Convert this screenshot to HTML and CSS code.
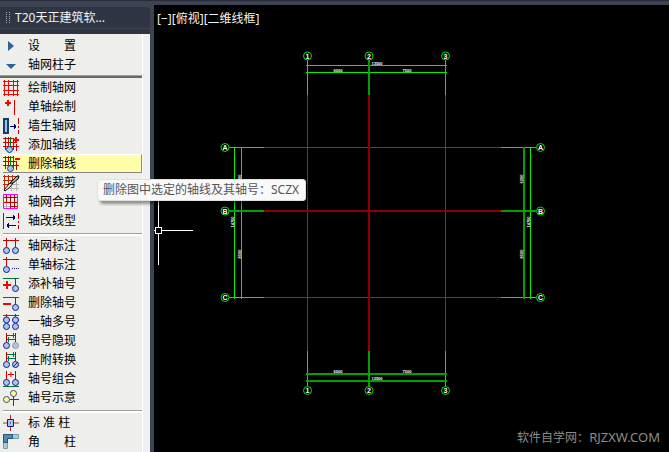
FILE: index.html
```html
<!DOCTYPE html>
<html lang="zh-CN">
<head>
  <meta charset="UTF-8" />
  <meta name="viewport" content="width=device-width, initial-scale=1.0"/>
  <title>T20天正建筑软件</title>
  <link rel="stylesheet" href="styles.css">
</head>
<body>
  <div class="app">

    <aside class="sidebar">
      <header class="panel-title">
        <svg class="grip" width="4" height="12" viewBox="0 0 4 12" aria-hidden="true">
          <path d="M.5 0v12M3.5 0v12" stroke="#aab0ba" stroke-dasharray="1 1"/>
        </svg>
        <span>T20天正建筑软...</span>
      </header>
      <div class="panel-edge"></div>

      <nav class="menu">
        <div class="group group-top">
          <button class="item"><svg class="icon" viewBox="0 0 16 16"><path d="M5 3l6 5-6 5z" fill="#2a629a"/></svg>设　　置</button>
          <button class="item"><svg class="icon" viewBox="0 0 16 16"><path d="M3 7h10l-5 5z" fill="#2a629a"/></svg>轴网柱子</button>
        </div>

        <div class="group">
          <button class="item"><svg class="icon" viewBox="0 0 16 16"><path d="M1.500 0v16M5.500 0v16M10.500 0v16M14.500 0v16M0 1.500h16M0 5.500h16M0 10.500h16M0 14.500h16" stroke="#f00"/></svg>绘制轴网</button>
          <button class="item"><svg class="icon" viewBox="0 0 16 16"><path d="M2 4h6M5 1v6" stroke="#f00" stroke-width="2"/><path d="M11.500 1v15" stroke="#e00000"/></svg>单轴绘制</button>
          <button class="item"><svg class="icon" viewBox="0 0 16 16"><path d="M1 1h4v14H1z" fill="#9cc4dc" stroke="#123f68" stroke-width="2"/><path d="M7 8.500h6M11.500 6v5M12.500 7v3" stroke="#000080"/><path d="M15.500 0v16" stroke="#c00000" stroke-dasharray="6 2 2 2"/></svg>墙生轴网</button>
          <button class="item"><svg class="icon" viewBox="0 0 16 16"><path d="M2.500 0v13M5.500 0v9M10.500 1v12M13.500 7v7M0 1.500h10M0 5.500h14M0 9.500h16" stroke="#c80000"/><path d="M7.500 0v9" stroke="#008000"/><path d="M10 3h6M13 0v6" stroke="#f00" stroke-width="2"/><circle cx="6.500" cy="12.500" r="3" fill="#a5c8f2" stroke="#18389c"/></svg>添加轴线</button>
          <button class="item active" aria-describedby="tip"><svg class="icon" viewBox="0 0 16 16"><path d="M2.500 0v13M5.500 0v9M10.500 0v13M13.500 6v8M0 1.500h11M0 5.500h14M0 9.500h16" stroke="#c80000"/><path d="M7.500 0v9" stroke="#008000"/><path d="M12 3h5" stroke="#f00" stroke-width="2"/><circle cx="7.500" cy="12.500" r="3" fill="#a5c8f2" stroke="#18389c"/></svg>删除轴线</button>
          <button class="item"><svg class="icon" viewBox="0 0 16 16"><path d="M8.500 8v8M13.500 3v13M7 9.500h9M5 13.500h11" stroke="#b5b5ad"/><path d="M1.500 0v14M5.500 0v11M9.500 0v8M0 1.500h13M0 5.500h11M0 9.500h7" stroke="#c82800"/><path d="M1 15l6-7 3 0-3 4-5 4z" fill="#fff" stroke="#000"/><path d="M7 8l7-7 2 0-1 3-5 4z" fill="#aaa" stroke="#000"/></svg>轴线裁剪</button>
          <button class="item"><svg class="icon" viewBox="0 0 16 16"><path d="M3.500 8v6M1 12.500h6" stroke="#b5b5ad"/><path d="M3.500 1v8M7.500 1v13M11.500 1v13M1 3.500h13M1 8.500h13M8 12.500h6" stroke="#b00000"/><path d="M.500 .500h14v14H.500z" fill="none" stroke="#f0f"/></svg>轴网合并</button>
          <button class="item"><svg class="icon" viewBox="0 0 16 16"><path d="M.500 0v16" stroke="#c00000"/><path d="M15.500 0v16" stroke="#c00000" stroke-dasharray="6 2 2 2"/><path d="M3 4.500h9M10.500 2v5M11.500 3v3M4 12.500h9M5.500 10v5M4.500 11v3" stroke="#000080"/></svg>轴改线型</button>
        </div>

        <div class="group">
          <button class="item"><svg class="icon" viewBox="0 0 16 16"><path d="M0 2.500h16M3.500 0v9M12.500 0v9" stroke="#c80000"/><circle cx="3.500" cy="12.500" r="3" fill="#a5c8f2" stroke="#18188c"/><circle cx="12.500" cy="12.500" r="3" fill="#a5c8f2" stroke="#18188c"/></svg>轴网标注</button>
          <button class="item"><svg class="icon" viewBox="0 0 16 16"><path d="M0 2.500h16M3.500 0v9" stroke="#c80000"/><circle cx="3.500" cy="12.500" r="3" fill="#a5c8f2" stroke="#18188c"/><path d="M9 11.500h7" stroke="#18188c" stroke-dasharray="1 1"/></svg>单轴标注</button>
          <button class="item"><svg class="icon" viewBox="0 0 16 16"><path d="M0 2.500h16" stroke="#007040"/><path d="M12.500 3v7" stroke="#c80000"/><path d="M0 9h8M4 5v8" stroke="#f00" stroke-width="2"/><circle cx="12.500" cy="12.500" r="3" fill="#a5c8f2" stroke="#18188c"/></svg>添补轴号</button>
          <button class="item"><svg class="icon" viewBox="0 0 16 16"><path d="M0 2.500h16" stroke="#007040"/><path d="M12.500 3v7" stroke="#c80000"/><path d="M0 9h8" stroke="#f00" stroke-width="2"/><circle cx="12.500" cy="12.500" r="3" fill="#a5c8f2" stroke="#18188c"/></svg>删除轴号</button>
          <button class="item"><svg class="icon" viewBox="0 0 16 16"><path d="M0 1.500h16" stroke="#007040"/><path d="M3.500 0v3M12.500 0v3" stroke="#c80000"/><g fill="#a5c8f2" stroke="#18188c"><circle cx="3.500" cy="6" r="3"/><circle cx="12.500" cy="6" r="3"/><circle cx="3.500" cy="12.500" r="3"/><circle cx="12.500" cy="12.500" r="3"/></g></svg>一轴多号</button>
          <button class="item"><svg class="icon" viewBox="0 0 16 16"><path d="M3.500 0v9M12.500 0v9" stroke="#c80000"/><path d="M4 2.500h8M10.500 0v5M4 6.500h8M5.500 4v5" stroke="#007040"/><circle cx="3.500" cy="12.500" r="3" fill="#a5c8f2" stroke="#18188c"/><circle cx="12.500" cy="12.500" r="3" fill="#a5c8f2" stroke="#999"/></svg>轴号隐现</button>
          <button class="item"><svg class="icon" viewBox="0 0 16 16"><path d="M3.500 0v9M12.500 0v9" stroke="#c80000"/><path d="M4 2.500h8M10.500 0v5M4 6.500h8M5.500 4v5" stroke="#007040"/><circle cx="3.500" cy="12.500" r="3" fill="#a5c8f2" stroke="#18188c"/><circle cx="12.500" cy="12.500" r="3" fill="#a5c8f2" stroke="#18188c"/><path d="M10 15l5-5" stroke="#18188c"/></svg>主附转换</button>
          <button class="item"><svg class="icon" viewBox="0 0 16 16"><path d="M3.500 0v9M12.500 0v9M5 3.500h6M8 1v5" stroke="#c80000"/><path d="M0 15.500h16" stroke="#007040"/><circle cx="3.500" cy="11.500" r="3" fill="#a5c8f2" stroke="#18188c"/><circle cx="12.500" cy="11.500" r="3" fill="#a5c8f2" stroke="#18188c"/></svg>轴号组合</button>
          <button class="item"><svg class="icon" viewBox="0 0 16 16"><path d="M7 9.500h9M10.500 6v10" stroke="#c80000"/><circle cx="3.500" cy="9.500" r="3" fill="#ffff98" stroke="#444470"/><circle cx="10.500" cy="3.500" r="3" fill="#ffff98" stroke="#444470"/></svg>轴号示意</button>
        </div>

        <div class="group">
          <button class="item"><svg class="icon" viewBox="0 0 16 16"><path d="M0 8h16M7.500 0v16" stroke="#b43030"/><path d="M4.500 4.500h6v7h-6z" fill="#a5c8f2" stroke="#18188c"/><path d="M7 8h1" stroke="#18188c"/></svg>标 准 柱</button>
          <button class="item"><svg class="icon" viewBox="0 0 16 16"><path d="M.500 .500h15v4H4.500v10h-4z" fill="#a6cedf" stroke="#7898ac"/><path d="M.500 .500h9v4h-5v4h-4z" fill="#4f8bb5" stroke="#22547c"/></svg>角　　柱</button>
        </div>
      </nav>
    </aside>

    <main class="canvas">
      <h1 class="view-label">[−][俯视][二维线框]</h1>

      <svg class="drawing" viewBox="0 0 515 447" preserveAspectRatio="xMinYMin meet">
        <!-- axis grid -->
        <g class="lines">
          <path d="M153.500 90v256M291.500 90v256M110 142.500h237M110 292.500h237" stroke="#f00000"/>
          <path d="M215 90v256M110 206h237" stroke="#880000" stroke-width="2"/>
        </g>

        <!-- axis ends and dimension lines -->
        <g class="lines" stroke="#00f000">
          <path d="M153.500 55v35M291.500 55v35M153.500 346v35M291.500 346v35"/>
          <path d="M75 142.500h35M75 292.500h35M347 142.500h35M347 292.500h35"/>
          <path d="M152 60.500h141M152 67.500h141M80.500 142v152M87.500 142v152M376.500 142v152"/>
          <path d="M215 55v35M215 346v35M75 206h35M347 206h35M152 369h141M152 376h141M370 142v152" stroke="#00a000" stroke-width="2"/>
        </g>

        <g fill="#000" stroke="#00e000">
          <circle cx="153.500" cy="51" r="4"/>
          <circle cx="215" cy="51" r="4"/>
          <circle cx="291.500" cy="51" r="4"/>
          <circle cx="153.500" cy="385.500" r="4"/>
          <circle cx="215" cy="385.500" r="4"/>
          <circle cx="291.500" cy="385.500" r="4"/>
          <circle cx="71" cy="142.500" r="4"/>
          <circle cx="71" cy="206" r="4"/>
          <circle cx="71" cy="292.500" r="4"/>
          <circle cx="386.500" cy="142.500" r="4"/>
          <circle cx="386.500" cy="206" r="4"/>
          <circle cx="386.500" cy="292.500" r="4"/>
        </g>

        <g class="axis-no">
          <text x="153.500" y="53.500">1</text>
          <text x="215" y="53.500">2</text>
          <text x="291.500" y="53.500">3</text>
          <text x="153.500" y="388">1</text>
          <text x="215" y="388">2</text>
          <text x="291.500" y="388">3</text>
          <text x="71" y="145">A</text>
          <text x="71" y="208.500">B</text>
          <text x="71" y="295">C</text>
          <text x="386.500" y="145">A</text>
          <text x="386.500" y="208.500">B</text>
          <text x="386.500" y="295">C</text>
        </g>

        <g class="dim">
          <text x="223" y="60">13500</text>
          <text x="184" y="67">6000</text>
          <text x="253" y="67">7500</text>
          <text x="184" y="368">6000</text>
          <text x="253" y="368">7500</text>
          <text x="223" y="375">13500</text>
          <text transform="translate(87 174) rotate(-90)">6200</text>
          <text transform="translate(87 249) rotate(-90)">8500</text>
          <text transform="translate(80 217) rotate(-90)">14700</text>
          <text transform="translate(369 174) rotate(-90)">6200</text>
          <text transform="translate(369 249) rotate(-90)">8500</text>
          <text transform="translate(376 217) rotate(-90)">14700</text>
        </g>

        <!-- cursor -->
        <g class="lines" stroke="#fff">
          <path d="M4.500 192v30M4.500 229v31M8 225.500h31M0 225.500h1"/>
          <path d="M1.500 222.500h6v6h-6z" fill="none"/>
        </g>
      </svg>

      <p class="watermark">软件自学网：<span class="domain">RJZXW.COM</span></p>
    </main>

    <div class="tooltip" id="tip" role="tooltip">删除图中选定的轴线及其轴号：SCZX</div>
  </div>
</body>
</html>
```

FILE: styles.css
```css
:root {
  --frame: #3c4454;
  --panel: #eeeeea;
  --row: 19px;
}

* {
  box-sizing: border-box;
}

body {
  margin: 0;
  background-color: var(--frame);
  font-family: "Noto Sans", "Noto Sans CJK SC", sans-serif;
  font-size: 12px;
}

.app {
  position: relative;
  display: flex;
  min-height: 100vh;
  padding-top: 4px;
  border-top: 1px solid #282d39;
}

.sidebar {
  display: flex;
  flex-direction: column;
  flex: none;
  width: 150px;
  padding-top: 2px;
}

.panel-title {
  display: flex;
  align-items: center;
  gap: 5px;
  height: 21px;
  padding-left: 6px;
  border-radius: 0 4px 0 0;
  background-color: #2f3542;
  color: #f2f2f2;
  line-height: 20px;
}

.panel-edge {
  height: 5px;
  margin-top: 1px;
  border-radius: 0 4px 0 0;
  background-color: #2f3542;
}

.menu {
  flex: 1;
  padding: 2px 7px 0 0;
  background: linear-gradient(to left, #f0f0f0 7px, #fff 7px, #fff 8px, var(--panel) 8px);
}

.group {
  position: relative;
  margin-right: 1px;
  padding: 3px 0;
}

/* separator above each group */
.group + .group::before {
  content: "";
  position: absolute;
  top: 0;
  left: 3px;
  right: 0;
  height: 2px;
  border-top: 1px solid #a0a0a0;
  background-color: #fff;
}

.group-top {
  padding: 0 0 1px;
}

.group-top + .group::before {
  left: 0;
  background-color: #696969;
}

.item {
  display: flex;
  align-items: center;
  gap: 9px;
  width: calc(100% - 3px);
  height: var(--row);
  margin-left: 3px;
  padding: 0;
  border: 1px solid transparent;
  border-left: 0;
  background: none;
  color: #000;
  font: inherit;
  line-height: 16px;
  text-align: left;
  white-space: pre;
}

.item.active {
  background-color: #ffffa8;
  border-color: #fff #888 #888;
}

.icon {
  flex: none;
  width: 16px;
  height: 16px;
  overflow: visible;
}

.canvas {
  position: relative;
  flex: 1;
  margin-left: 4px;
  background-color: #000;
  overflow: hidden;
}

.drawing {
  display: block;
  width: 100%;
}

.lines {
  shape-rendering: crispEdges;
}

.axis-no,
.dim {
  fill: #fff;
  font-family: "Liberation Sans", sans-serif;
  font-weight: bold;
  text-anchor: middle;
}

.axis-no {
  font-size: 7px;
}

.dim {
  font-size: 4px;
}

.view-label {
  position: absolute;
  top: 5px;
  left: 3px;
  margin: 0;
  color: #f4f4f4;
  font-size: 12px;
  font-weight: normal;
  line-height: 18px;
}

.watermark {
  position: absolute;
  right: 9px;
  bottom: 7px;
  margin: 0;
  color: #8c8c8c;
  line-height: 18px;
}

.domain {
  font-size: 13px;
}

.tooltip {
  position: absolute;
  top: 178px;
  left: 97px;
  padding: 0 6px 0 5px;
  border: 1px solid #e0e0e0;
  border-radius: 3px;
  background-color: #f9f9f9;
  box-shadow: 3px 3px 3px rgba(0, 0, 0, 0.4);
  color: #555;
  line-height: 20px;
  white-space: nowrap;
}
```
